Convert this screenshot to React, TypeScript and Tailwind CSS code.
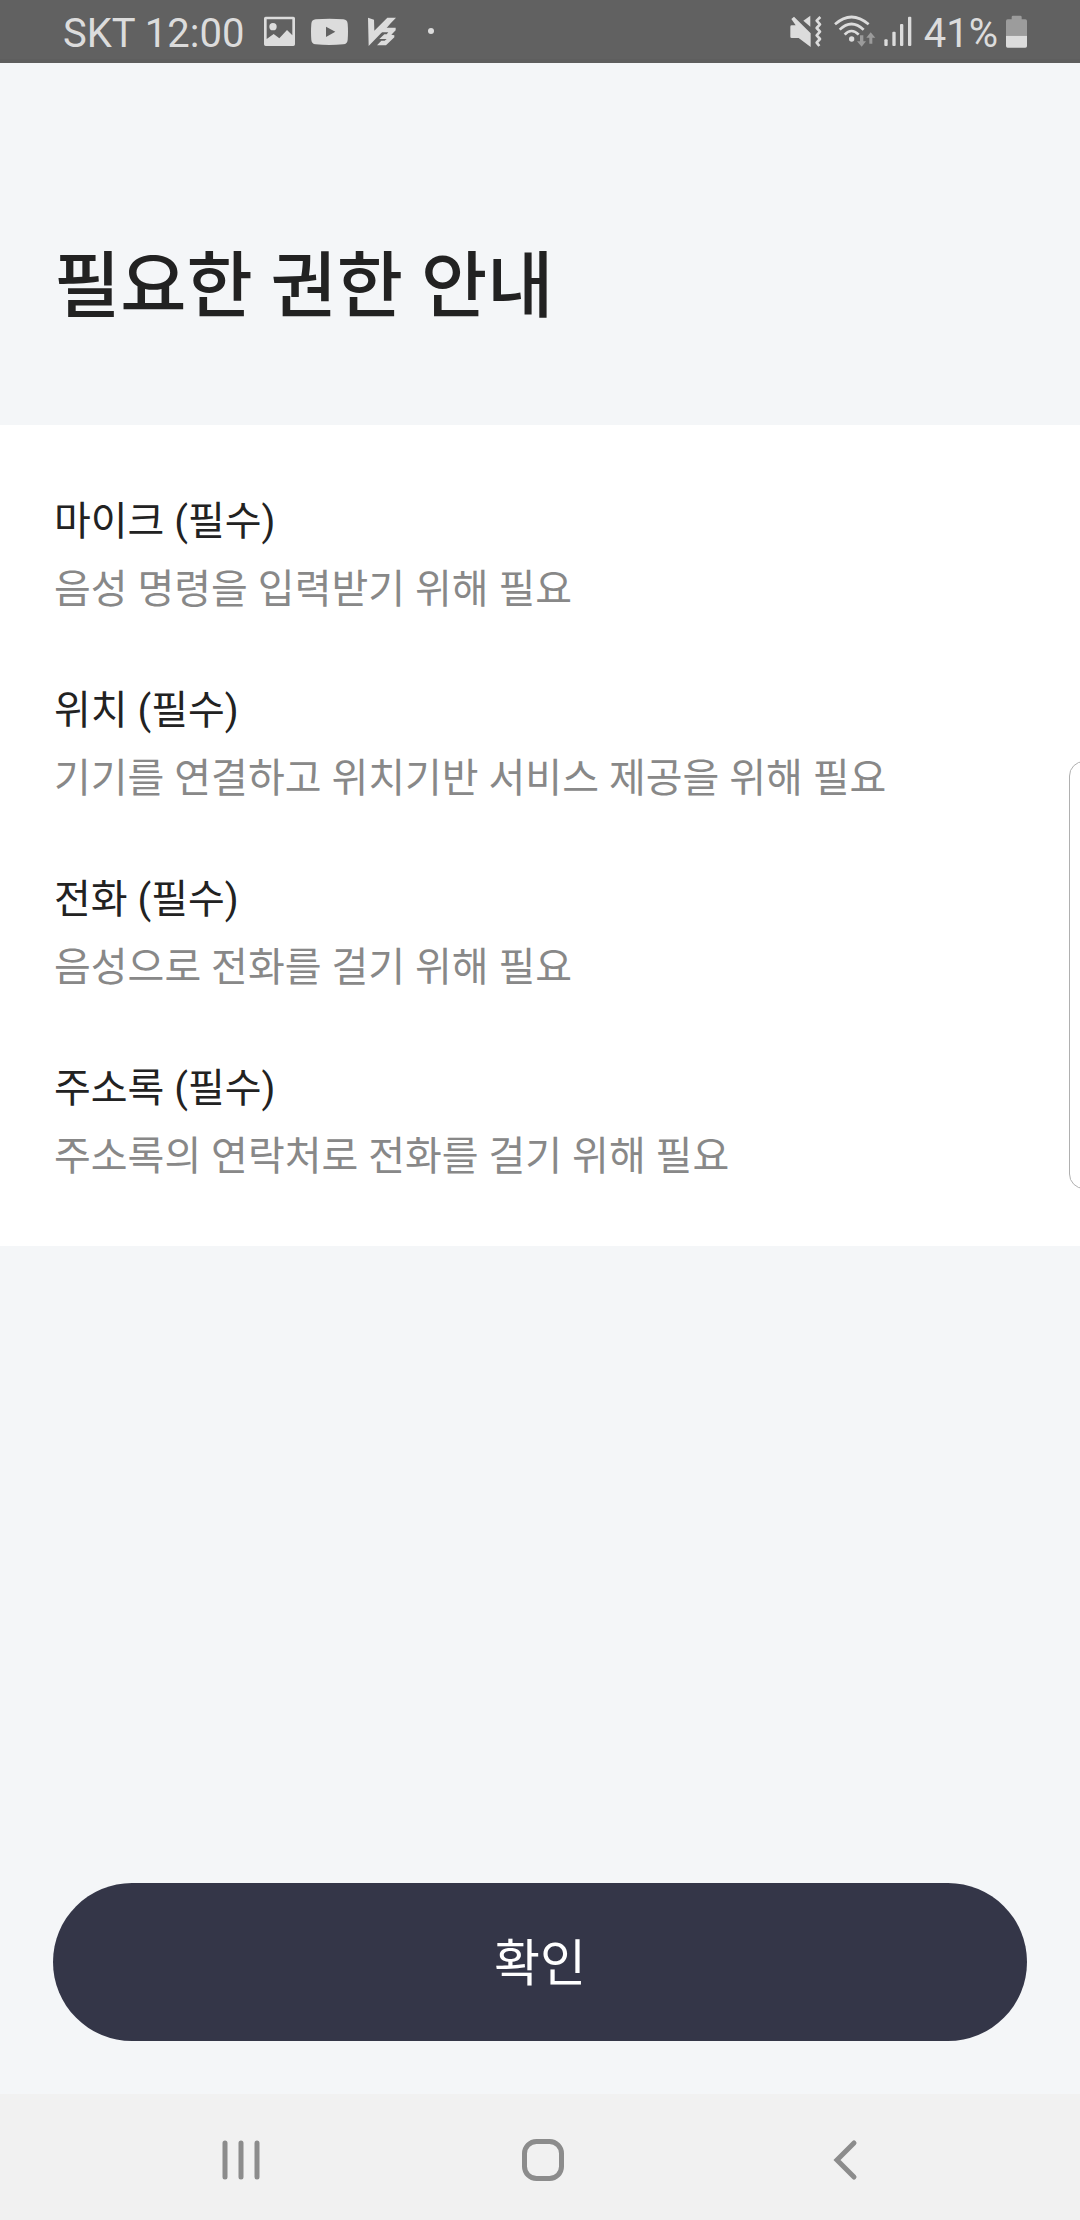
const permissions = [
  { name: "마이크 (필수)", reason: "음성 명령을 입력받기 위해 필요" },
  { name: "위치 (필수)", reason: "기기를 연결하고 위치기반 서비스 제공을 위해 필요" },
  { name: "전화 (필수)", reason: "음성으로 전화를 걸기 위해 필요" },
  { name: "주소록 (필수)", reason: "주소록의 연락처로 전화를 걸기 위해 필요" },
];

function StatusBar() {
  return (
    <header className="flex h-[63px] items-center justify-between border-b-4 border-[#5e5e5e] bg-[#616161] pt-1 pr-[53px] pl-[63px] text-[40px] leading-none text-[#dcdcdc]">
      <div className="flex items-center">
        <span className="mr-5 pt-1">SKT 12:00</span>
        {/* gallery */}
        <svg className="mr-4 h-[33px] w-[31px]" viewBox="671 45 93 99" fill="currentColor">
          <path fillRule="evenodd" d="M676 50H759Q764 50 764 55V133Q764 138 759 138H676Q671 138 671 133V55Q671 50 676 50ZM679 58V117L700 102L717 115L740 90L756 106V58Z" />
          <circle cx="698" cy="80" r="11" />
        </svg>
        {/* youtube */}
        <svg className="mr-5 h-[33px] w-[37px]" viewBox="810 45 111 99" fill="currentColor">
          <path fillRule="evenodd" d="M824 58Q865 54 907 58Q919 59 920 71Q922 95 920 120Q919 132 907 133Q865 137 824 133Q812 132 811 120Q809 95 811 71Q812 59 824 58ZM855 80V111L883 95Z" />
        </svg>
        {/* V3 */}
        <svg className="mr-8 h-[33px] w-[28px]" viewBox="980 45 84 99" fill="currentColor">
          <path d="M980 53L998 59L999 92L1038 53H1064L982 138Z" />
          <path d="M1048 70L1036 83H1063V91L1050 104L1059 106V112L1034 136H1007L1020 122H1030L1036 117H1014L1029 103H1036L1041 97H1018Z" />
        </svg>
        <svg className="h-[33px] w-[6px]" viewBox="0 0 6 33" fill="currentColor">
          <circle cx="3" cy="16" r="3" />
        </svg>
      </div>
      <div className="flex items-center">
        {/* vibrate */}
        <svg className="mr-3 h-[33px] w-[32px]" viewBox="84 45 96 99" fill="currentColor">
          <path d="M85 80Q85 76 89 76H101L88 57L96 50L146 100V141L110 114H89Q85 114 85 110Z" />
          <path d="M145 47V80L124 62Z" />
          <path d="M175 51L164 62L174 73L164 84L174 95L164 106L174 117L164 128L172 138" fill="none" stroke="currentColor" strokeWidth="8" strokeLinejoin="round" />
        </svg>
        {/* wifi */}
        <svg className="mr-2 h-[33px] w-[42px]" viewBox="218 43 126 99" fill="none" stroke="currentColor" strokeWidth="8">
          <path d="M221 71Q270 27 322 71" />
          <path d="M235 87Q270 53 307 87" />
          <path d="M250 102Q270 80 292 102" />
          <circle cx="271" cy="115" r="8" fill="currentColor" stroke="none" />
          <g className="text-[#9b9b9b]" fill="currentColor" stroke="none">
            <path d="M296 104H306V122H314L301 138L287 122H296Z" />
            <path d="M324 129H333V111H342L328 95L315 111H324Z" />
          </g>
        </svg>
        {/* signal */}
        <svg className="mr-3 h-[33px] w-[28px]" viewBox="368 45 84 99" fill="currentColor">
          <rect x="369" y="118" width="10" height="20" rx="3" />
          <rect x="393" y="95" width="10" height="43" rx="3" />
          <rect x="416" y="72" width="10" height="66" rx="3" />
          <rect x="440" y="50" width="10" height="88" rx="3" />
        </svg>
        <span className="mr-2 pt-1">41%</span>
        {/* battery */}
        <svg className="h-[33px] w-[21px]" viewBox="735 45 63 99">
          <path d="M752 58V51Q752 47 756 47H778Q782 47 782 51V58H793Q798 58 798 63V107H735V63Q735 58 740 58Z" fill="#9c9c9c" />
          <path d="M735 107H798V138Q798 143 793 143H740Q735 143 735 138Z" fill="#dcdcdc" />
        </svg>
      </div>
    </header>
  );
}

function NavBar() {
  return (
    <nav className="flex h-[126px] items-center justify-center bg-[#f1f1f1] pt-1.5 pl-1.5 text-[#8c8c8c]">
      <button className="flex w-[302px] justify-center" aria-label="최근 앱">
        <svg className="h-[42px] w-[42px]" viewBox="0 0 42 42" stroke="currentColor" strokeWidth="5" strokeLinecap="round">
          <path d="M5 4V38M21 4V38M37 4V38" />
        </svg>
      </button>
      <button className="flex w-[302px] justify-center" aria-label="홈">
        <svg className="h-[42px] w-[42px]" viewBox="0 0 42 42" fill="none" stroke="currentColor" strokeWidth="5">
          <rect x="2.5" y="2.5" width="37" height="37" rx="12" />
        </svg>
      </button>
      <button className="flex w-[302px] justify-center" aria-label="뒤로">
        <svg className="h-[42px] w-[42px]" viewBox="0 0 42 42" fill="none" stroke="currentColor" strokeWidth="5" strokeLinecap="round">
          <path d="M30 4L13 21L30 38" />
        </svg>
      </button>
    </nav>
  );
}

export default function App() {
  return (
    <div className="flex min-h-screen flex-col bg-[#f4f6f8] font-[Roboto,'Noto_Sans_CJK_KR',sans-serif] text-[#222222]">
      <StatusBar />
      <h1 className="px-[54px] pt-[172px] pb-[86px] text-[72px] leading-[104px] font-medium">
        필요한 권한 안내
      </h1>
      <section className="relative overflow-hidden bg-white px-[54px] pt-[67px] pb-[59px]">
        <ul className="flex flex-col gap-[61px]">
          {permissions.map((item) => (
            <li key={item.name} className="flex flex-col gap-2 text-[40px] leading-[60px]">
              <h2>{item.name}</h2>
              <p className="text-[#888888]">{item.reason}</p>
            </li>
          ))}
        </ul>
        {/* edge panel handle */}
        <div className="absolute top-[336px] -right-5 h-[428px] w-[31px] rounded-[15px] border border-[#b0b0b0]" />
      </section>
      <main className="flex flex-1 flex-col justify-end px-[53px] pb-[53px]">
        <button className="h-[158px] w-full rounded-full bg-[#343648] pt-1 text-[50px] text-white">
          확인
        </button>
      </main>
      <NavBar />
    </div>
  );
}
